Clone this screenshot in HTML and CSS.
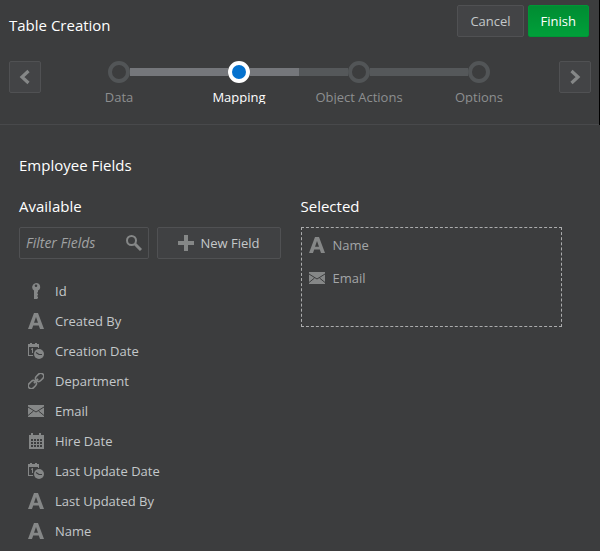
FILE: index.html
```html
<!DOCTYPE html>
<html lang="en">
<head>
    <meta charset="UTF-8">
    <meta name="viewport" content="width=device-width, initial-scale=1.0">
    <title>Table Creation</title>
    <link rel="stylesheet" href="styles.css">
</head>
<body>
    <!-- shared icons -->
    <svg class="sprite" aria-hidden="true">
        <symbol id="icon-text" viewBox="0 0 16 16">
            <path fill-rule="evenodd" d="M6 0h4l6 16h-4l-1.200-3.500H5.200L4 16H0zM8 4L6 9.800h4z"/>
        </symbol>
        <symbol id="icon-key" viewBox="0 0 16 16">
            <path fill-rule="evenodd" d="M8 0a4.200 4.200 0 0 1 4.200 4c0 1.700-.8 2.900-2.200 3.600V9l-1 1 1 1v1l-1 1 1 1v1l-1 1H6V7.600A4.200 4.200 0 0 1 8 0zM8 1.500a1.300 1.300 0 1 0 0 2.600 1.300 1.300 0 0 0 0-2.600z"/>
        </symbol>
        <symbol id="icon-datetime" viewBox="0 0 16 16">
            <path d="M0 1h2V0h2v1h3V0h2v1h2v4H10V4H1v8h4v1H0z"/>
            <path d="M3 6l1.500-1H5v5H4V6.500L3 7z"/>
            <circle cx="11" cy="11" r="5"/>
            <path d="M8 9.500l3 2h3" fill="none" stroke="#3c3d3e" stroke-width="1.200"/>
        </symbol>
        <symbol id="icon-link" viewBox="0 0 16 16">
            <g fill="none" stroke="currentColor" stroke-width="1.600" transform="rotate(-45 8 8)">
                <rect x="-1.700" y="5" width="9" height="6" rx="3"/>
                <rect x="8.700" y="5" width="9" height="6" rx="3"/>
                <path d="M5 8h6"/>
            </g>
        </symbol>
        <symbol id="icon-email" viewBox="0 0 16 16">
            <path d="M0 2h16v12H0z"/>
            <path d="M0 4l8 5 8-5M0 12.500l5.500-4.500M16 12.500L10.500 8" fill="none" stroke="#3c3d3e"/>
        </symbol>
        <symbol id="icon-date" viewBox="0 0 16 16">
            <path d="M1 2h2V0h2v2h6V0h2v2h3v14H1z"/>
            <path d="M3 6h2v2H3zM6 6h2v2H6zM9 6h2v2H9zM12 6h2v2h-2zM3 9h2v2H3zM6 9h2v2H6zM9 9h2v2H9zM12 9h2v2h-2zM3 12h2v2H3zM6 12h2v2H6zM9 12h2v2H9zM12 12h2v2h-2z" fill="#3c3d3e"/>
        </symbol>
    </svg>

    <header class="header">
        <div class="title-bar">
            <h1>Table Creation</h1>
            <div class="actions">
                <button type="button" class="btn">Cancel</button>
                <button type="button" class="btn btn-primary">Finish</button>
            </div>
        </div>

        <nav class="wizard" aria-label="Steps">
            <button type="button" class="btn btn-nav" aria-label="Previous">
                <svg class="icon" viewBox="0 0 16 16"><path d="M11.500 2L5 8l6.500 6" fill="none" stroke="currentColor" stroke-width="3.200"/></svg>
            </button>
            <ol class="train">
                <li class="step visited"><a href="#data"><span class="track"><span class="dot"></span></span><span class="step-label">Data</span></a></li>
                <li class="step current"><a href="#mapping" aria-current="step"><span class="track"><span class="dot"></span></span><span class="step-label">Mapping</span></a></li>
                <li class="step"><a href="#actions"><span class="track"><span class="dot"></span></span><span class="step-label">Object Actions</span></a></li>
                <li class="step"><a href="#options"><span class="track"><span class="dot"></span></span><span class="step-label">Options</span></a></li>
            </ol>
            <button type="button" class="btn btn-nav" aria-label="Next">
                <svg class="icon" viewBox="0 0 16 16"><path d="M4.500 2L11 8l-6.500 6" fill="none" stroke="currentColor" stroke-width="3.200"/></svg>
            </button>
        </nav>
    </header>

    <main class="content">
        <h2>Employee Fields</h2>
        <div class="columns">
            <section>
                <h2>Available</h2>
                <div class="toolbar">
                    <div class="search">
                        <input type="text" id="filter" placeholder="Filter Fields" aria-label="Filter Fields">
                        <svg class="icon" viewBox="0 0 16 16"><circle cx="5.500" cy="5.500" r="4.500" fill="none" stroke="currentColor" stroke-width="2"/><path d="M9 9l6 6" stroke="currentColor" stroke-width="3"/></svg>
                    </div>
                    <button type="button" class="btn btn-new">
                        <svg class="icon" viewBox="0 0 16 16"><path d="M6 0h4v6h6v4h-6v6H6v-6H0V6h6z"/></svg>
                        New Field
                    </button>
                </div>
                <ul class="fields">
                    <li><svg class="icon"><use href="#icon-key"/></svg>Id</li>
                    <li><svg class="icon"><use href="#icon-text"/></svg>Created By</li>
                    <li><svg class="icon"><use href="#icon-datetime"/></svg>Creation Date</li>
                    <li><svg class="icon"><use href="#icon-link"/></svg>Department</li>
                    <li><svg class="icon"><use href="#icon-email"/></svg>Email</li>
                    <li><svg class="icon"><use href="#icon-date"/></svg>Hire Date</li>
                    <li><svg class="icon"><use href="#icon-datetime"/></svg>Last Update Date</li>
                    <li><svg class="icon"><use href="#icon-text"/></svg>Last Updated By</li>
                    <li><svg class="icon"><use href="#icon-text"/></svg>Name</li>
                </ul>
            </section>
            <section>
                <h2>Selected</h2>
                <ul class="selected">
                    <li><svg class="icon"><use href="#icon-text"/></svg>Name</li>
                    <li><svg class="icon"><use href="#icon-email"/></svg>Email</li>
                </ul>
            </section>
        </div>
    </main>
</body>
</html>
```
FILE: styles.css
```css
* {
    box-sizing: border-box;
}

body {
    margin: 0;
    background: #3c3d3e;
    color: #c4c8ca;
    font-family: "Open Sans", "Noto Sans", sans-serif;
    font-size: 13px;
    line-height: 20px;
}

h1, h2 {
    margin: 0;
    color: #fff;
    font-size: 15px;
    font-weight: 400;
    line-height: 20px;
}

ul, ol {
    list-style: none;
    margin: 0;
    padding: 0;
}

.sprite {
    display: none;
}

.icon {
    flex: none;
    width: 16px;
    height: 16px;
    color: #858787;
    fill: currentColor;
}

/* header */
.header {
    border-right: 1px solid #000;
}

.title-bar {
    display: flex;
    justify-content: space-between;
    padding: 5px 10px 0 9px;
}

.title-bar h1 {
    padding-top: 10px;
}

.actions {
    display: flex;
    gap: 4px;
}

.btn {
    display: flex;
    align-items: center;
    justify-content: center;
    height: 32px;
    padding: 0 12px;
    border: 1px solid #505153;
    border-radius: 2px;
    background: #434446;
    color: #c4c8ca;
    font: inherit;
    cursor: pointer;
}

.btn-primary {
    border-color: #009636;
    background: linear-gradient(#008c32, #00a03a);
    color: #fff;
}

/* wizard steps */
.wizard {
    display: flex;
    padding: 24px 8px 20px 9px;
    border-bottom: 1px solid #48494b;
}

.btn-nav {
    flex: none;
    width: 32px;
    padding: 0;
}

.train {
    display: grid;
    grid-template-columns: repeat(4, 1fr);
    flex: 1;
    margin: 0 20px 0 18px;
}

.step a {
    color: #8d8f90;
    text-align: center;
    text-decoration: none;
}

.track {
    display: flex;
    align-items: center;
    height: 22px;
}

.track::before,
.track::after {
    content: "";
    flex: 1;
    height: 8px;
    background: #55585a;
}

.visited .track::after,
.current .track::before,
.current .track::after {
    background: #75777b;
}

.step:first-child .track::before,
.step:last-child .track::after {
    background: none;
}

.dot {
    width: 22px;
    height: 22px;
    border: 4px solid #525557;
    border-radius: 50%;
}

.current .dot {
    border-color: #fff;
    background: #0572ce;
}

.step.current a {
    color: #fff;
}

.step-label {
    display: block;
    padding-top: 7px;
    line-height: 14px;
    overflow: hidden;
}

/* content */
.content {
    padding: 30px 38px 5px 19px;
}

.columns {
    display: grid;
    grid-template-columns: 1fr 1fr;
    gap: 20px;
    padding-top: 21px;
}

.columns section {
    min-width: 0;
}

.toolbar {
    display: flex;
    gap: 8px;
    margin-top: 11px;
}

.search {
    display: flex;
    align-items: center;
    flex: 1;
    min-width: 0;
    height: 32px;
    padding: 0 6px;
    border: 1px solid #505153;
    border-radius: 2px;
}

.search input {
    flex: 1;
    min-width: 0;
    padding: 0;
    border: 0;
    outline: 0;
    background: none;
    color: #c4c8ca;
    font: inherit;
    font-size: 14px;
}

.search input::placeholder {
    color: #a0a2a3;
    font-style: italic;
}

.btn-new {
    gap: 6px;
    padding: 0 20px;
    background: #404143;
}

.fields {
    padding: 17px 9px 0;
}

.fields li {
    display: flex;
    align-items: center;
    gap: 11px;
    height: 30px;
}

.selected {
    min-height: 100px;
    margin-top: 11px;
    padding: 0 7px;
    border: 1px dashed #abacad;
    color: #a3a6a8;
}

.selected li {
    display: flex;
    align-items: center;
    gap: 8px;
    height: 33px;
}
```
